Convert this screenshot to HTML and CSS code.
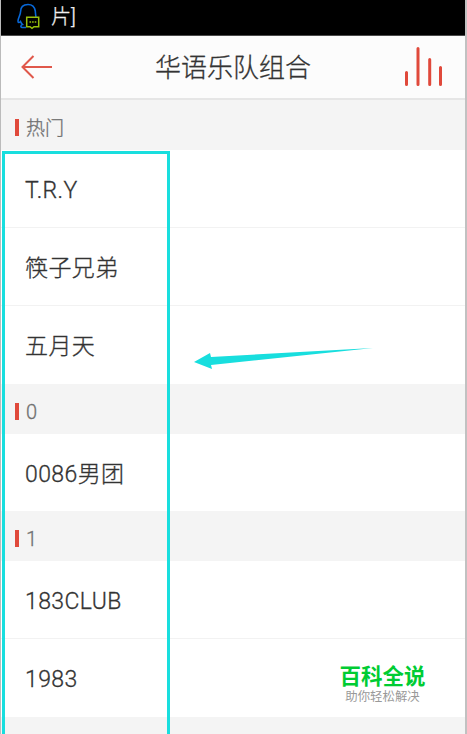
FILE: index.html
```html
<!DOCTYPE html>
<html lang="zh-CN">
<head>
    <meta charset="UTF-8">
    <meta name="viewport" content="width=device-width, initial-scale=1.0">
    <title>华语乐队组合</title>
    <link rel="stylesheet" href="styles.css">
</head>
<body>
    <div class="phone">
        <div class="status">
            <svg class="status-icon" width="24" height="28" viewBox="0 0 24 28" fill="none">
                <path d="M19 14 C18.5 12 18.5 10 18.3 8 C17.5 3 14.5 1.5 11 1.5 C6 1.5 3.5 4 3.5 9 C3.5 12 1 15 1 18 C1 20 2 20 3.5 18.5 C4 20 4.5 20.5 5.5 21.5 C3.5 22 3 24.5 6 24.5 H9" stroke="#0868d8" stroke-width="1.6"/>
                <path d="M9.7 14.3 H21.7 V23.7 H17 L15 25.3 L13 23.7 H9.7 Z" stroke="#98c00c" stroke-width="1.5"/>
                <path d="M12.5 19 H19.5" stroke="#98c00c" stroke-width="1.6" stroke-dasharray="1.6 1"/>
            </svg>
            <span class="status-text">片]</span>
        </div>
        <div class="header">
            <svg class="back" width="34" height="24" viewBox="0 0 34 24" fill="none" stroke="#e0584b" stroke-width="2">
                <path d="M14.5 1 L3.5 12 L14.5 23 M3.5 12 H33"/>
            </svg>
            <h1>华语乐队组合</h1>
            <svg class="bars" width="38" height="40" viewBox="0 0 38 40" stroke="#e0493b" stroke-width="3" stroke-linecap="round">
                <path d="M1.5 25.5 V37.5 M13 1.5 V37.5 M24.7 12.5 V37.5 M35.5 20.5 V37.5"/>
            </svg>
        </div>

        <div class="letter hot"><i></i><span>热门</span></div>
        <div class="item">T.R.Y</div>
        <div class="item">筷子兄弟</div>
        <div class="item">五月天</div>
        <div class="letter"><i></i><span>0</span></div>
        <div class="item single">0086男团</div>
        <div class="letter"><i></i><span>1</span></div>
        <div class="item">183CLUB</div>
        <div class="item">1983</div>
        <div class="letter end"></div>

        <div class="mark-box"></div>
        <svg class="mark-arrow" width="180" height="24" viewBox="0 0 180 24">
            <path d="M0 16 L16 7 L17 11 L179 2 L17 19 L18 23 Z" fill="#18dede"/>
        </svg>
        <div class="logo">
            <div class="logo-name">百科全说</div>
            <div class="logo-sub">助你轻松解决</div>
        </div>
    </div>
</body>
</html>
```

FILE: styles.css
```css
* {
    box-sizing: border-box;
}
body {
    margin: 0;
    background: #fff;
    font-family: Roboto, "Noto Sans CJK SC", sans-serif;
    font-weight: 300;
    color: #333;
}
.phone {
    position: relative;
    width: 467px;
    height: 734px;
    overflow: hidden;
    border-left: 1px solid #bbb;
    border-right: 2px solid #c1c1c1;
}
.status {
    display: flex;
    height: 36px;
    padding: 3px 0 0 16px;
    background: #000;
    border-bottom: 1px solid #4a4a4a;
}
.status-text {
    margin-left: 10px;
    font-size: 20px;
    line-height: 28px;
    color: #eee;
    -webkit-text-stroke: 0.3px;
}
.header {
    display: flex;
    justify-content: space-between;
    align-items: center;
    height: 64px;
    padding: 0 22px 0 18px;
    background: #fcfcfc;
    border-bottom: 2px solid #e6e6e6;
}
h1 {
    margin: 2px 0 0 8px;
    font-size: 26px;
    font-weight: 300;
    line-height: 40px;
    -webkit-text-stroke: 0.3px;
}
.letter {
    display: flex;
    align-items: center;
    height: 50px;
    padding: 5px 0 0 14px;
    background: #f4f4f4;
    font-size: 20px;
    color: #707070;
    -webkit-text-stroke: 0.3px;
}
.letter i {
    width: 4px;
    height: 17px;
    margin-right: 7px;
    background: #e0493b;
}
.hot {
    padding-top: 4px;
    font-size: 19px;
}
.hot span {
    margin-top: -1px;
}
.item {
    height: 78px;
    padding-left: 24px;
    border-bottom: 1px solid #f2f2f2;
    background: #fff;
    font-size: 23px;
    line-height: 81px;
    letter-spacing: 0.4px;
    -webkit-text-stroke: 0.3px;
}
.single {
    height: 77px;
}
.item:has(+ .letter) {
    border-bottom-color: #fff;
}
.end {
    height: 17px;
}
.mark-box {
    position: absolute;
    left: 1px;
    top: 151px;
    width: 168px;
    height: 600px;
    border: 3px solid #18dede;
}
.mark-arrow {
    position: absolute;
    left: 193px;
    top: 346px;
}
.logo {
    position: absolute;
    left: 338px;
    top: 664px;
    width: 87px;
    text-align: center;
}
.logo-name {
    font-size: 21.5px;
    font-weight: 700;
    line-height: 25px;
    color: #0c3;
}
.logo-sub {
    font-size: 12.4px;
    font-weight: 400;
    line-height: 16px;
    color: #999;
}
```
